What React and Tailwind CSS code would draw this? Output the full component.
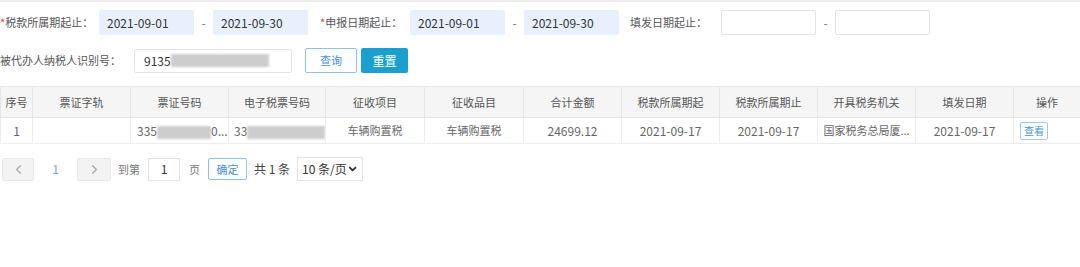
import { FiChevronLeft, FiChevronRight, FiChevronDown } from "react-icons/fi";

const font = { fontFamily: '"Noto Sans CJK SC", "Noto Sans", sans-serif' };

const cols = [
  { title: "序号", w: 32 },
  { title: "票证字轨", w: 98 },
  { title: "票证号码", w: 98 },
  { title: "电子税票号码", w: 97 },
  { title: "征收项目", w: 99 },
  { title: "征收品目", w: 99 },
  { title: "合计金额", w: 98 },
  { title: "税款所属期起", w: 98 },
  { title: "税款所属期止", w: 98 },
  { title: "开具税务机关", w: 98 },
  { title: "填发日期", w: 98 },
  { title: "操作", w: 67 },
];

function DateBox({ value, filled }) {
  return (
    <div
      className={`w-[95px] h-[25px] shrink-0 flex items-center pl-[8px] text-[12px] text-[#333] rounded-[2px] ${
        filled ? "bg-[#e8f0fe]" : "bg-white border border-[#e3e3e3]"
      }`}
    >
      {value}
    </div>
  );
}

function Dash() {
  return <div className="w-[19px] shrink-0 text-center text-[12px] text-[#777]">-</div>;
}

function Blur({ w }) {
  return <span className="inline-block h-[13px] bg-[#cdcdcd] blur-[1px] align-middle" style={{ width: w }} />;
}

export default function App() {
  return (
    <div className="w-[1080px] h-[267px] bg-white overflow-hidden border-t-2 border-[#ececec]" style={font}>
      {/* filtros */}
      <div className="flex items-center mt-[8px] text-[11px] text-[#555]">
        <div className="w-[99px] shrink-0 whitespace-nowrap">
          <span className="text-[#e4393c]">*</span>税款所属期起止：
        </div>
        <DateBox value="2021-09-01" filled />
        <Dash />
        <DateBox value="2021-09-30" filled />
        <div className="w-[102px] shrink-0 pl-[12px] whitespace-nowrap">
          <span className="text-[#e4393c]">*</span>申报日期起止：
        </div>
        <DateBox value="2021-09-01" filled />
        <Dash />
        <DateBox value="2021-09-30" filled />
        <div className="w-[102px] shrink-0 pl-[11px] whitespace-nowrap">填发日期起止：</div>
        <DateBox value="" />
        <Dash />
        <DateBox value="" />
      </div>

      <div className="flex items-center mt-[13px] text-[11px] text-[#555]">
        <div className="w-[134px] shrink-0 whitespace-nowrap">被代办人纳税人识别号：</div>
        <div className="w-[158px] h-[24px] flex items-center pl-[9px] bg-white border border-[#e3e3e3] rounded-[2px] text-[#333] text-[12px]">
          9135<Blur w={98} />
        </div>
        <button className="ml-[13px] w-[52px] h-[25px] border border-[#8dc0ea] rounded-[2px] bg-white text-[#4a8fd6] text-[11px]">
          查询
        </button>
        <button className="ml-[4px] w-[47px] h-[25px] bg-[#1a9fcf] text-white text-[12px] rounded-[2px]">
          重置
        </button>
      </div>

      {/* tabla */}
      <table className="mt-[13px] table-fixed border-collapse text-[11px]" style={{ width: 1080 }}>
        <colgroup>
          {cols.map((c) => (
            <col key={c.title} style={{ width: c.w }} />
          ))}
        </colgroup>
        <thead>
          <tr className="h-[31px] bg-[#f5f5f5] text-[#555]">
            {cols.map((c) => (
              <th key={c.title} className="font-normal border border-[#e6e6e6] text-center whitespace-nowrap">
                {c.title}
              </th>
            ))}
          </tr>
        </thead>
        <tbody>
          <tr className="h-[26px] text-[#666] text-center">
            <td className="border border-[#ececec] text-[12px]">1</td>
            <td className="border border-[#ececec]"></td>
            <td className="border border-[#ececec] text-left pl-[6px] whitespace-nowrap overflow-hidden text-[12px]">
              335<Blur w={54} />0...
            </td>
            <td className="border border-[#ececec] text-left pl-[5px] whitespace-nowrap overflow-hidden text-[12px]">
              33<Blur w={78} />
            </td>
            <td className="border border-[#ececec]">车辆购置税</td>
            <td className="border border-[#ececec]">车辆购置税</td>
            <td className="border border-[#ececec] text-[12px]">24699.12</td>
            <td className="border border-[#ececec] text-[12px]">2021-09-17</td>
            <td className="border border-[#ececec] text-[12px]">2021-09-17</td>
            <td className="border border-[#ececec] whitespace-nowrap">国家税务总局厦...</td>
            <td className="border border-[#ececec] text-[12px]">2021-09-17</td>
            <td className="border border-[#ececec] text-left pl-[6px]">
              <button className="w-[28px] h-[18px] border border-[#9ccaee] rounded-[2px] text-[#4a8fd6] text-[10px] leading-none">
                查看
              </button>
            </td>
          </tr>
        </tbody>
      </table>

      {/* paginación */}
      <div className="flex items-center mt-[13px] text-[11px] text-[#777]">
        <div className="ml-[2px] w-[32px] h-[23px] flex items-center justify-center bg-[#f3f3f3] border border-[#e8e8e8] rounded-[2px] text-[#aaa]">
          <FiChevronLeft size={15} />
        </div>
        <div className="w-[43px] text-center text-[#6fa3dc] text-[12px]">1</div>
        <div className="w-[34px] h-[23px] flex items-center justify-center bg-[#f3f3f3] border border-[#e8e8e8] rounded-[2px] text-[#aaa]">
          <FiChevronRight size={15} />
        </div>
        <div className="ml-[7px] w-[30px] whitespace-nowrap">到第</div>
        <div className="w-[32px] h-[23px] flex items-center justify-center border border-[#e3e3e3] text-[#333] text-[12px]">1</div>
        <div className="ml-[9px] w-[19px]">页</div>
        <button className="w-[39px] h-[22px] border border-[#8dc0ea] rounded-[2px] text-[#4a8fd6] text-[11px]">
          确定
        </button>
        <div className="ml-[7px] w-[43px] text-[#444] text-[12px] whitespace-nowrap">共 1 条</div>
        <div className="w-[66px] h-[24px] flex items-center justify-between px-[4px] border border-[#e3e3e3] text-[#333] text-[12px] whitespace-nowrap">
          10 条/页
          <FiChevronDown size={12} strokeWidth={4} />
        </div>
      </div>
    </div>
  );
}
